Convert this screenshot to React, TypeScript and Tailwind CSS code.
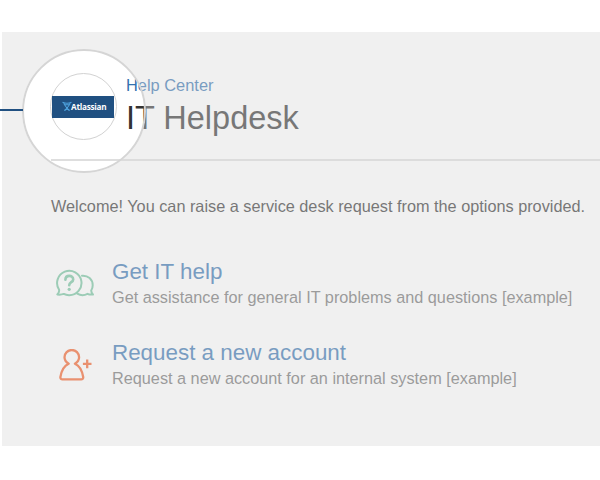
import React from 'react';

function HelpIcon() {
  return (
    <svg width="40" height="30" viewBox="0 0 40 30" fill="none" stroke="#71c29d" strokeWidth="2" strokeLinecap="round" strokeLinejoin="round">
      <path d="M4.1 21.7A12.2 12.2 0 1 1 14 27.2C11.7 27.2 10 26.6 8.8 25.9C7.2 26.5 4.6 26.8 2.3 26.5C3.7 25.2 4.4 23.7 4.1 21.7Z" />
      <path d="M27 7.7C33 7.2 37.7 11.3 37.7 17.2C37.7 19.3 37.1 21.2 36.2 22.5C36.2 24.2 36.8 25.4 38 26.5C35.8 26.8 33.9 26.5 32.5 25.8C29.3 27.5 25.3 27.4 22.3 25.6" />
      <path d="M10.4 11.7C10.4 6.7 18.2 6.7 18.2 11.4C18.2 14.4 14.2 14 14.2 17.2" strokeWidth="2.6" />
      <circle cx="14.2" cy="21.3" r="1.6" fill="#71c29d" stroke="none" />
    </svg>
  );
}

function AccountIcon() {
  return (
    <svg width="36" height="34" viewBox="0 0 36 34" fill="none" stroke="#f35f28" strokeWidth="2.3" strokeLinecap="round" strokeLinejoin="round">
      <path d="M9.7 14.7C7.1 13.2 5.5 10.9 5.5 8.3A7.3 7.3 0 0 1 20.1 8.3C20.1 10.9 18.5 13.2 15.9 14.7C20.7 16.7 23.2 22.2 24.2 28C24.4 29.3 23.5 30.3 22.2 30.3H3.4C2.1 30.3 1.2 29.3 1.4 28C2.4 22.2 4.9 16.7 9.7 14.7Z" />
      <path d="M28.2 10.6V19.2M23.9 14.9H32.5" strokeLinecap="butt" />
    </svg>
  );
}

function Logo() {
  return (
    <div className="flex h-[67px] w-[67px] items-center justify-center rounded-full border border-[#d2d2d2]">
      <div className="-ml-px flex h-[22px] w-[62px] shrink-0 items-center bg-[#205081] pl-[10px]">
        <svg className="shrink-0" width="10" height="11" viewBox="0 0 10 11" fill="none" stroke="#4fa3df" strokeWidth="1.1">
          <path d="M.5 1.2Q5 3.2 9.5 1.2M1.8 2Q2.3 4.5 7.5 9.6M8.2 2Q7.7 4.5 2.5 9.6M3 3.8H7" />
          <path d="M2.6 9.3Q5 7.2 7.4 9.3" />
        </svg>
        <span className="ml-[-1px] font-['Open_Sans',sans-serif] text-[8.2px] font-bold leading-[12px] tracking-[-0.25px] text-white">Atlassian</span>
      </div>
    </div>
  );
}

function RequestRow({ icon, title, text }: { icon: React.ReactNode; title: React.ReactNode; text: string }) {
  return (
    <div className="flex h-[81px] whitespace-nowrap">
      <div className="w-[57px] shrink-0 pt-[10px]">{icon}</div>
      <div>
        <h2 className="text-[22.4px] leading-[28px] text-[#3572b0]">{title}</h2>
        <p className="mt-px text-[16.26px] leading-[20px] text-[#707070]">{text}</p>
      </div>
    </div>
  );
}

export default function App() {
  return (
    <div className="relative h-[480px] w-[600px] overflow-hidden bg-white pl-[2px] pt-[32px] font-['Liberation_Sans',Arial,sans-serif]">
      <main className="relative h-[414px] overflow-hidden bg-white pl-[48px]">
        <header className="flex h-[127px] whitespace-nowrap pt-[41px]">
          <Logo />
          <div className="ml-[9px] pt-[2px]">
            <p className="text-[16.4px] leading-[20px] text-[#3572b0]">Help Center</p>
            <h1 className="mt-[3px] text-[32.5px] leading-[40px] text-[#333]">IT Helpdesk</h1>
          </div>
        </header>
        <hr className="ml-px h-[2px] border-0 bg-[#dedede]" />
        <p className="ml-px mt-[35px] whitespace-nowrap text-[16.28px] leading-[20px] text-[#333]">
          Welcome! You can raise a service desk request from the options provided.
        </p>
        <section className="ml-[5px] mt-[42px]">
          <RequestRow icon={<HelpIcon />} title="Get IT help" text="Get assistance for general IT problems and questions [example]" />
          <RequestRow icon={<div className="pl-[4px]"><AccountIcon /></div>} title="Request a new account" text="Request a new account for an internal system [example]" />
        </section>
        <div className="absolute left-[20px] top-[17px] h-[124px] w-[124px] rounded-full border-2 border-[#d5d5d5] shadow-[0_0_0_700px_rgba(218,218,218,0.407)]" />
      </main>
      <div className="absolute left-0 top-[109px] h-[2px] w-[23px] bg-[#205081]" />
    </div>
  );
}
